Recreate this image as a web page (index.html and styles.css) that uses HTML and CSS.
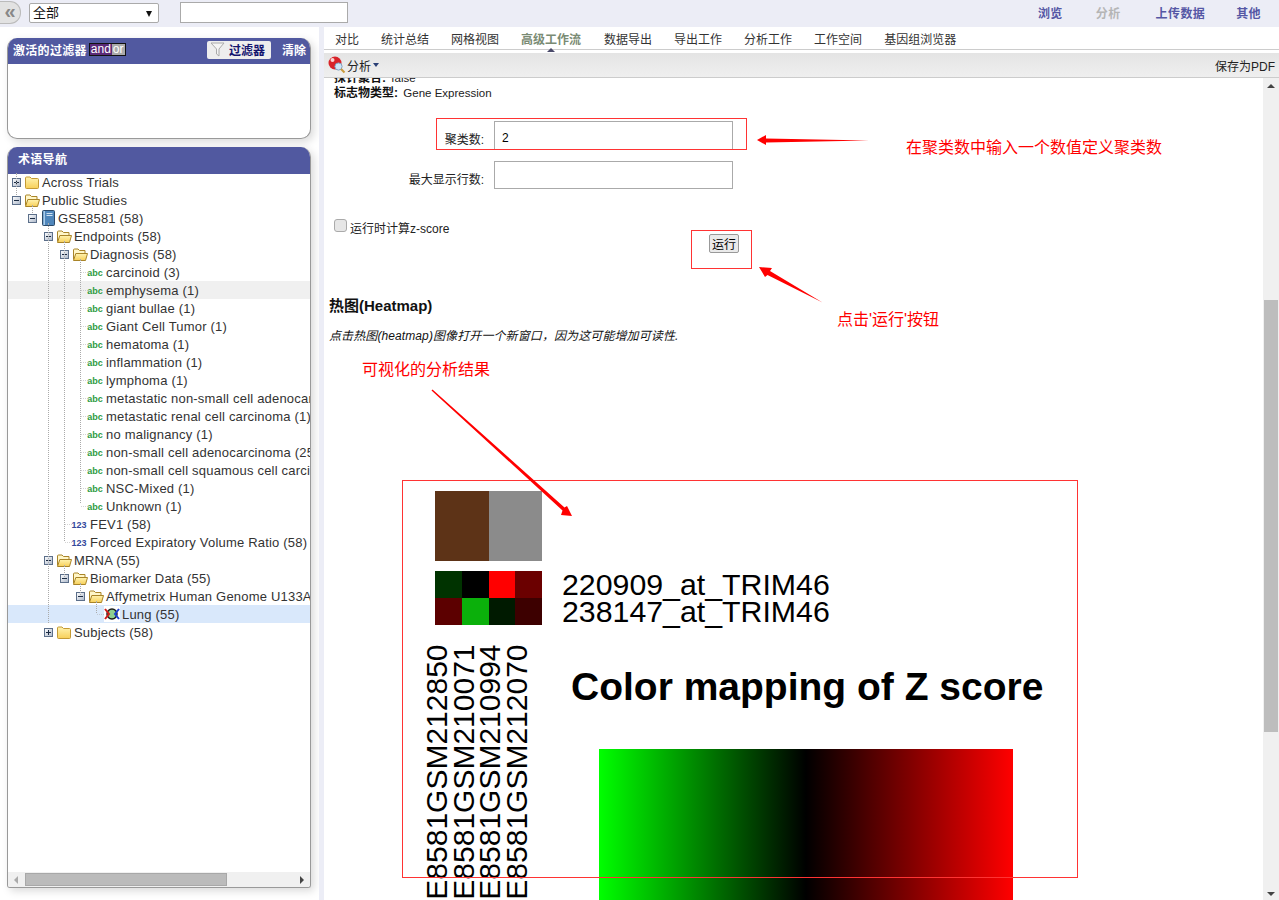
FILE: index.html
```html
<!DOCTYPE html>
<html lang="zh-CN">
<head>
  <meta charset="UTF-8">
  <title>高级工作流</title>
  <link rel="stylesheet" href="styles.css">
</head>
<body>
  <svg class="sprites" width="0" height="0">
    <defs>
      <linearGradient id="gold" x1="0" y1="0" x2="0" y2="1">
        <stop offset="0" stop-color="#fff3b0"/>
        <stop offset="1" stop-color="#f7cf58"/>
      </linearGradient>
      <linearGradient id="steel" x1="0" y1="0" x2="1" y2="1">
        <stop offset="0" stop-color="#ffffff"/>
        <stop offset="1" stop-color="#aab6c8"/>
      </linearGradient>
    </defs>
    <symbol id="folder" viewBox="0 0 16 16">
      <path d="M1.5 4 Q1.5 3 2.5 3 H6 L7.5 4.5 H13.5 Q14.5 4.5 14.5 5.5 V13.5 Q14.5 14.5 13.5 14.5 H2.5 Q1.5 14.5 1.5 13.5 Z" fill="url(#gold)" stroke="#c49a34"/>
    </symbol>
    <symbol id="folder-open" viewBox="0 0 16 16">
      <path d="M1.5 13.5 V4 Q1.5 3 2.5 3 H6 L7.5 4.5 H13 V7" fill="#fff6c8" stroke="#a98428"/>
      <path d="M1.5 14.5 L3.8 7.5 H15.5 L13.5 14.5 Z" fill="url(#gold)" stroke="#a98428" stroke-linejoin="round"/>
    </symbol>
    <symbol id="book" viewBox="0 0 16 16">
      <rect x="2.5" y="0.5" width="12" height="15" rx="1" fill="#4f86bb" stroke="#2c4a6a"/>
      <rect x="3.5" y="1" width="1.5" height="14" fill="#a9cbe8"/>
      <rect x="6.5" y="3" width="6" height="1" fill="#cfe2f2"/>
      <rect x="6.5" y="5" width="6" height="1" fill="#cfe2f2"/>
    </symbol>
    <symbol id="plus" viewBox="0 0 9 9">
      <rect x="0.5" y="0.5" width="8" height="8" fill="url(#steel)" stroke="#5c6f8a"/>
      <path d="M2 4.5 H7 M4.5 2 V7" stroke="#1c2c44"/>
    </symbol>
    <symbol id="minus" viewBox="0 0 9 9">
      <rect x="0.5" y="0.5" width="8" height="8" fill="url(#steel)" stroke="#5c6f8a"/>
      <path d="M2 4.5 H7" stroke="#1c2c44"/>
    </symbol>
  </svg>

  <div class="topbar">
    <div class="collapse-btn">«</div>
    <div class="select-wrap"><select class="scope"><option>全部</option></select></div>
    <input class="search" type="text">
    <div class="topnav">
      <a class="nav-browse">浏览</a>
      <a class="nav-analyze">分析</a>
      <a class="nav-upload">上传数据</a>
      <a class="nav-other">其他</a>
    </div>
  </div>

  <div class="page">
    <div class="sidebar">
      <div class="card filter-card">
        <div class="card-head">
          <span class="head-title">激活的过滤器</span>
          <span class="andor"><i class="and">and</i><i class="or">or</i></span>
          <span class="filter-btn">
            <svg width="15" height="15" viewBox="0 0 15 15"><path d="M1 1 H14 L9 7 V14 L6.5 12 V7 Z" fill="#f4f4f4" stroke="#aaa"/></svg>
            过滤器
          </span>
          <span class="clear">清除</span>
        </div>
      </div>

      <div class="card tree-card">
        <div class="card-head tree-head"><span class="head-title">术语导航</span></div>
        <div class="tree">
          <div class="guide g1"></div>
          <div class="guide g2"></div>
          <div class="guide g3"></div>
          <div class="guide g4"></div>
          <div class="guide g5"></div>
          <div class="guide g6"></div>
          <div class="guide g7"></div>
          <div class="guide g8"></div>

          <div class="row d0"><svg class="tog"><use href="#plus"/></svg><svg class="ico"><use href="#folder"/></svg>Across Trials</div>
          <div class="row d0"><svg class="tog"><use href="#minus"/></svg><svg class="ico"><use href="#folder-open"/></svg>Public Studies</div>
          <div class="row d1"><svg class="tog"><use href="#minus"/></svg><svg class="ico"><use href="#book"/></svg>GSE8581 (58)</div>
          <div class="row d2"><svg class="tog"><use href="#minus"/></svg><svg class="ico"><use href="#folder-open"/></svg>Endpoints (58)</div>
          <div class="row d3"><svg class="tog"><use href="#minus"/></svg><svg class="ico"><use href="#folder-open"/></svg>Diagnosis (58)</div>
          <div class="row d4"><span class="link"></span><span class="abc">abc</span>carcinoid (3)</div>
          <div class="row d4 hover"><span class="link"></span><span class="abc">abc</span>emphysema (1)</div>
          <div class="row d4"><span class="link"></span><span class="abc">abc</span>giant bullae (1)</div>
          <div class="row d4"><span class="link"></span><span class="abc">abc</span>Giant Cell Tumor (1)</div>
          <div class="row d4"><span class="link"></span><span class="abc">abc</span>hematoma (1)</div>
          <div class="row d4"><span class="link"></span><span class="abc">abc</span>inflammation (1)</div>
          <div class="row d4"><span class="link"></span><span class="abc">abc</span>lymphoma (1)</div>
          <div class="row d4"><span class="link"></span><span class="abc">abc</span>metastatic non-small cell adenocarcinoma (1)</div>
          <div class="row d4"><span class="link"></span><span class="abc">abc</span>metastatic renal cell carcinoma (1)</div>
          <div class="row d4"><span class="link"></span><span class="abc">abc</span>no malignancy (1)</div>
          <div class="row d4"><span class="link"></span><span class="abc">abc</span>non-small cell adenocarcinoma (25)</div>
          <div class="row d4"><span class="link"></span><span class="abc">abc</span>non-small cell squamous cell carcinoma (22)</div>
          <div class="row d4"><span class="link"></span><span class="abc">abc</span>NSC-Mixed (1)</div>
          <div class="row d4"><span class="link"></span><span class="abc">abc</span>Unknown (1)</div>
          <div class="row d3"><span class="link"></span><span class="num">123</span>FEV1 (58)</div>
          <div class="row d3"><span class="link"></span><span class="num">123</span>Forced Expiratory Volume Ratio (58)</div>
          <div class="row d2"><svg class="tog"><use href="#minus"/></svg><svg class="ico"><use href="#folder-open"/></svg>MRNA (55)</div>
          <div class="row d3"><svg class="tog"><use href="#minus"/></svg><svg class="ico"><use href="#folder-open"/></svg>Biomarker Data (55)</div>
          <div class="row d4"><svg class="tog"><use href="#minus"/></svg><svg class="ico"><use href="#folder-open"/></svg>Affymetrix Human Genome U133A 2.0 Array (55)</div>
          <div class="row d5 selected"><span class="link"></span>
            <svg class="ico" viewBox="0 0 16 16">
              <rect width="16" height="16" fill="#fff"/>
              <circle cx="8" cy="8" r="5" fill="#8fcf8f" stroke="#1a1a1a" stroke-width="1.5"/>
              <path d="M1 3 L5 8 L1 13" fill="none" stroke="#d01c1c" stroke-width="2"/>
              <path d="M15 3 L11 8 L15 13" fill="none" stroke="#1c3fd0" stroke-width="2"/>
            </svg>Lung (55)</div>
          <div class="row d2"><svg class="tog"><use href="#plus"/></svg><svg class="ico"><use href="#folder"/></svg>Subjects (58)</div>
        </div>
        <div class="hscroll">
          <span class="arrow-left"></span>
          <span class="hthumb"></span>
          <span class="arrow-right"></span>
        </div>
      </div>
    </div>

    <div class="gutter"></div>

    <div class="main">
      <div class="tabs">
        <a>对比</a>
        <a>统计总结</a>
        <a>网格视图</a>
        <a class="active">高级工作流</a>
        <a>数据导出</a>
        <a>导出工作</a>
        <a>分析工作</a>
        <a>工作空间</a>
        <a>基因组浏览器</a>
      </div>
      <div class="toolbar">
        <svg width="18" height="18" viewBox="0 0 18 18">
          <circle cx="7" cy="7" r="6.5" fill="#d8232a"/>
          <circle cx="4.5" cy="4" r="2" fill="#fbd5d5"/>
          <circle cx="10.5" cy="10.5" r="3.6" fill="#cfe6f7" stroke="#7f9fbf"/>
          <path d="M13 13 L16.5 16.5" stroke="#c99a3c" stroke-width="2"/>
        </svg>
        <span class="tool-label">分析</span><span class="caret"></span>
        <span class="save-pdf">保存为PDF</span>
      </div>

      <div class="content">
        <div class="scroller">
          <div class="meta">
            <div><b>探针聚合:</b> <span>false</span></div>
            <div><b>标志物类型:</b> <span>Gene Expression</span></div>
          </div>

          <div class="field field-first">
            <label>聚类数:</label>
            <input type="text" value="2">
          </div>
          <div class="field">
            <label>最大显示行数:</label>
            <input type="text">
          </div>

          <label class="zscore"><input type="checkbox"> 运行时计算z-score</label>
          <div class="run-row"><button class="run">运行</button></div>

          <h3 class="section-title">热图(Heatmap)</h3>
          <p class="hint">点击热图(heatmap)图像打开一个新窗口，因为这可能增加可读性.</p>

          <div class="figure">
            <div class="colorbar">
              <span class="brown"></span>
              <span class="gray"></span>
            </div>
            <div class="heat-row">
              <div class="heat">
                <span class="c1"></span><span class="c2"></span><span class="c3"></span><span class="c4"></span>
                <span class="c5"></span><span class="c6"></span><span class="c7"></span><span class="c8"></span>
              </div>
              <div class="probes">
                <div>220909_at_TRIM46</div>
                <div>238147_at_TRIM46</div>
              </div>
            </div>
            <div class="lower">
              <div class="samples">
                <span>GSE8581GSM212850</span>
                <span>GSE8581GSM210071</span>
                <span>GSE8581GSM210994</span>
                <span>GSE8581GSM212070</span>
              </div>
              <div class="legend">
                <div class="legend-title">Color mapping of Z score</div>
                <div class="gradient"></div>
              </div>
            </div>
          </div>
        </div>
        <div class="vscroll">
          <span class="arrow-up"></span>
          <span class="vthumb"></span>
          <span class="arrow-down"></span>
        </div>
      </div>

      <!-- 标注 -->
      <div class="note-box box-clusters"></div>
      <div class="note-box box-run"></div>
      <div class="note-box box-figure"></div>
      <div class="note note-clusters">在聚类数中输入一个数值定义聚类数</div>
      <div class="note note-run">点击'运行'按钮</div>
      <div class="note note-result">可视化的分析结果</div>
      <svg class="arrows" width="955" height="873" viewBox="324 27 955 873">
        <path d="M869 140.5 L766 138.5 V135 L757 140 L766 145 V142.5 Z" fill="#f00"/>
        <path d="M822.5 302.5 L770 271 L772 268 L759 267 L765 277 L767.5 275 Z" fill="#f00"/>
        <path d="M431.5 390.5 L432.5 389.5 L564.5 507.5 L567 506 L572 516 L561 515 L562.5 510.5 Z" fill="#f00"/>
      </svg>
    </div>
  </div>
</body>
</html>
```

FILE: styles.css
```css
html, body {
  margin: 0;
  height: 900px;
  overflow: hidden;
}
body {
  font-family: "Liberation Sans", "Noto Sans CJK SC", sans-serif;
  font-size: 12px;
  color: #222;
  background: #fff;
}
.sprites {
  position: absolute;
}

/* 顶部 */
.topbar {
  height: 27px;
  padding-bottom: 2px;
  background: #ecedf6;
  display: flex;
  align-items: center;
  box-sizing: border-box;
}
.collapse-btn {
  width: 21px;
  height: 23px;
  box-sizing: border-box;
  background: #e2e2e2;
  border: 1px solid #bbb;
  border-left: 0;
  border-radius: 0 11px 11px 0;
  color: #888;
  font-size: 20px;
  font-weight: bold;
  line-height: 18px;
  text-align: center;
}
.select-wrap {
  position: relative;
  margin-left: 8px;
}
.select-wrap::after {
  content: "";
  position: absolute;
  right: 7px;
  top: 8px;
  border-left: 3px solid transparent;
  border-right: 3px solid transparent;
  border-top: 6px solid #111;
}
.scope {
  appearance: none;
  display: block;
  width: 130px;
  height: 20px;
  padding: 0 3px;
  background: #fff;
  border: 1px solid #aaa;
  border-radius: 2px;
  font: 13px "Liberation Sans", "Noto Sans CJK SC", sans-serif;
  color: #111;
}
.search {
  width: 168px;
  height: 21px;
  box-sizing: border-box;
  margin-left: 21px;
  border: 1px solid #aaa;
  background: #fff;
}
.topnav {
  margin-left: auto;
  display: flex;
  font-weight: bold;
  letter-spacing: 0.4px;
  color: #5557a5;
  padding-right: 18px;
}
.nav-analyze { color: #b5b5b5; margin-left: 33px; }
.nav-upload { margin-left: 35px; }
.nav-other { margin-left: 31px; }

.page {
  display: flex;
  height: 873px;
}

/* 左栏 */
.sidebar {
  width: 319px;
  flex: none;
  box-sizing: border-box;
  padding: 11px 8px 0 7px;
}
.card {
  border: 1px solid #999;
  border-top: 0;
  border-radius: 10px;
  background: #fff;
  box-shadow: 3px 3px 8px rgba(0, 0, 0, 0.15);
  overflow: hidden;
}
.filter-card {
  height: 101px;
  box-sizing: border-box;
}
.card-head {
  margin: 0 -1px;
  height: 26px;
  box-sizing: border-box;
  padding: 0 5px 3px 6px;
  display: flex;
  align-items: center;
  background: #5159a0;
  color: #fff;
  font-weight: bold;
}
.head-title {
  letter-spacing: 0.3px;
}
.andor {
  display: flex;
  margin-left: 2px;
  border: 1px solid #111;
  font-weight: normal;
  line-height: 11px;
}
.andor i {
  font-style: normal;
  padding: 0 1px;
}
.and { background: #5b2a78; }
.or { background: #aaa; }
.filter-btn {
  margin-left: auto;
  width: 64px;
  height: 18px;
  box-sizing: border-box;
  padding-left: 3px;
  display: flex;
  align-items: center;
  gap: 4px;
  background: #eee;
  border-radius: 2px;
  color: #14146e;
}
.clear {
  margin-left: 11px;
}
.tree-card {
  margin-top: 8px;
  height: 741px;
  box-sizing: border-box;
  display: flex;
  flex-direction: column;
  border-radius: 10px 10px 3px 3px;
}
.tree-head {
  height: 27px;
  flex: none;
  padding-left: 11px;
  padding-bottom: 4px;
}
.tree {
  position: relative;
  flex: 1;
  overflow: hidden;
  margin-top: -1px;
}
.row {
  height: 18px;
  display: flex;
  align-items: center;
  white-space: nowrap;
  font-size: 13px;
  letter-spacing: 0.2px;
  color: #333;
}
.d0 { padding-left: 4px; }
.d1 { padding-left: 20px; }
.d2 { padding-left: 36px; }
.d3 { padding-left: 52px; }
.d4 { padding-left: 68px; }
.d5 { padding-left: 84px; }
.d5 .ico { margin-left: 1px; }
.hover { background: #f0f0f0; }
.selected { background: #d9e8fb; }
.tog {
  width: 9px;
  height: 9px;
  flex: none;
  margin: 0 3px 0 0;
}
.ico {
  width: 16px;
  height: 16px;
  flex: none;
  margin-right: 2px;
}
.link {
  width: 12px;
  height: 1px;
  flex: none;
  box-sizing: border-box;
  margin-right: -1px;
  border-bottom: 1px dotted #aaa;
  clip-path: inset(0 0 0 4px);
}
.abc, .num {
  width: 16px;
  flex: none;
  margin-right: 3px;
  padding-top: 2px;
  font-size: 9px;
  font-weight: bold;
  letter-spacing: 0;
  text-align: center;
}
.abc { color: #2e9c3f; }
.num { color: #33489c; }
.guide {
  position: absolute;
  border-left: 1px dotted #aaa;
}
.g1 { left: 8px; top: 0; height: 22px; }
.g2 { left: 24px; top: 32px; height: 8px; }
.g3 { left: 40px; top: 50px; height: 400px; }
.g4 { left: 56px; top: 68px; height: 300px; }
.g5 { left: 72px; top: 86px; height: 244px; }
.g6 { left: 56px; top: 392px; height: 12px; }
.g7 { left: 72px; top: 410px; height: 12px; }
.g8 { left: 88px; top: 428px; height: 12px; }
.hscroll {
  height: 15px;
  flex: none;
  display: flex;
  align-items: center;
  background: #f0f0f0;
}
.hthumb {
  width: 202px;
  height: 13px;
  box-sizing: border-box;
  margin-left: 7px;
  background: #bbb;
  border: 1px solid #a8a8a8;
}
.arrow-left, .arrow-right {
  width: 0;
  height: 0;
  border-top: 4px solid transparent;
  border-bottom: 4px solid transparent;
}
.arrow-left {
  margin-left: 6px;
  border-right: 4px solid #aaa;
}
.arrow-right {
  margin-left: auto;
  margin-right: 6px;
  border-left: 4px solid #444;
}

.gutter {
  width: 5px;
  flex: none;
  background: #ecedf6;
}

/* 主区 */
.main {
  position: relative;
  flex: 1;
  min-width: 0;
  display: flex;
  flex-direction: column;
}
.tabs {
  height: 22px;
  flex: none;
  display: flex;
  align-items: center;
  gap: 22px;
  padding-left: 11px;
  border-bottom: 1px solid #ccc;
  color: #333;
}
.tabs a {
  position: relative;
}
.tabs .active {
  color: #7a8b74;
  font-weight: bold;
  margin-right: 1px;
}
.tabs .active::after {
  content: "";
  position: absolute;
  left: 26px;
  bottom: -5px;
  border-left: 4px solid transparent;
  border-right: 4px solid transparent;
  border-bottom: 4px solid #4a4a6a;
}
.toolbar {
  height: 24px;
  flex: none;
  margin-top: 3px;
  padding: 0 4px;
  display: flex;
  align-items: center;
  background: linear-gradient(#e4e4e4, #efefef);
  border-bottom: 1px solid #ccc;
}
.tool-label {
  margin-left: 1px;
}
.caret {
  margin-left: 2px;
  border-left: 3px solid transparent;
  border-right: 3px solid transparent;
  border-top: 4px solid #2a3f75;
}
.save-pdf {
  margin-left: auto;
}
.content {
  flex: 1;
  min-height: 0;
  display: flex;
}
.scroller {
  flex: 1;
  min-width: 0;
  overflow: hidden;
}
.meta {
  margin: -7px 0 0 10px;
  line-height: 15px;
}
.meta b {
  color: #111;
  margin-right: 2px;
}
.meta span {
  font-size: 11.5px;
}
.field {
  display: flex;
  align-items: center;
  height: 28px;
  margin-top: 11px;
}
.field-first {
  margin-top: 20px;
  height: 29px;
}
.field label {
  width: 160px;
  text-align: right;
  padding-top: 6px;
}
.field input {
  width: 239px;
  height: 100%;
  box-sizing: border-box;
  margin-left: 10px;
  padding: 4px 7px 0;
  border: 1px solid #aaa;
  font: 12px "Liberation Sans", sans-serif;
}
.zscore {
  display: flex;
  align-items: center;
  margin: 30px 0 0 10px;
}
.zscore input {
  appearance: none;
  width: 13px;
  height: 13px;
  box-sizing: border-box;
  margin: 0 3px 4px 0;
  background: #e6e6e6;
  border: 1px solid #aaa;
  border-radius: 3px;
}
.run-row {
  margin: -2px 0 0 385px;
}
.run {
  display: block;
  width: 30px;
  height: 19px;
  padding: 0;
  background: #eaeaea;
  border: 1px solid #999;
  border-radius: 2px;
  font: 12px "Liberation Sans", "Noto Sans CJK SC", sans-serif;
}
.section-title {
  margin: 44px 0 0 5px;
  font-size: 15px;
  line-height: 18px;
  color: #111;
}
.hint {
  margin: 14px 0 0 5px;
  font-size: 12px;
  line-height: 15px;
  font-style: italic;
  letter-spacing: 0.1px;
  color: #111;
}
.figure {
  margin: 147px 0 0 111px;
}
.colorbar {
  display: flex;
  width: 107px;
  height: 70px;
}
.brown { flex: 1; background: #5d3317; }
.gray { flex: 1; background: #8b8b8b; }
.heat-row {
  display: flex;
  align-items: center;
  margin-top: 10px;
}
.heat {
  display: grid;
  grid-template-columns: repeat(4, 1fr);
  grid-template-rows: 1fr 1fr;
  width: 107px;
  height: 54px;
}
.c1 { background: #003300; }
.c2 { background: #000; }
.c3 { background: #f00; }
.c4 { background: #6b0000; }
.c5 { background: #5c0000; }
.c6 { background: #0bb00b; }
.c7 { background: #001a00; }
.c8 { background: #3d0000; }
.probes {
  margin-left: 20px;
  font-family: "Liberation Sans", sans-serif;
  font-size: 30.3px;
  line-height: 27px;
  color: #000;
}
.lower {
  display: flex;
  margin-top: 20px;
}
.samples {
  display: flex;
  flex: none;
  width: 148px;
  margin-left: -12px;
}
.samples span {
  width: 26.7px;
  height: 298px;
  writing-mode: vertical-rl;
  transform: rotate(180deg);
  font-family: "Liberation Sans", sans-serif;
  font-size: 30px;
  line-height: 27px;
  color: #000;
  white-space: nowrap;
  text-align: left;
}
.legend-title {
  margin-top: 20px;
  font-family: "Liberation Sans", sans-serif;
  font-size: 39px;
  font-weight: bold;
  line-height: 44px;
  color: #000;
  white-space: nowrap;
}
.gradient {
  width: 414px;
  height: 160px;
  margin: 40px 0 0 28px;
  background: linear-gradient(90deg, #0f0, #000 50%, #f00);
}
.vscroll {
  width: 16px;
  flex: none;
  position: relative;
  background: #f0f0f0;
}
.vthumb {
  position: absolute;
  left: 1px;
  top: 222px;
  width: 14px;
  height: 432px;
  background: #bdbdbd;
}
.arrow-up, .arrow-down {
  position: absolute;
  left: 4px;
  width: 0;
  height: 0;
  border-left: 4px solid transparent;
  border-right: 4px solid transparent;
}
.arrow-up { top: 6px; border-bottom: 4px solid #444; }
.arrow-down { bottom: 4px; border-top: 4px solid #444; }

/* 标注 */
.note-box {
  position: absolute;
  box-sizing: border-box;
  border: 1px solid #f33;
}
.box-clusters { left: 112px; top: 91px; width: 311px; height: 32px; }
.box-run { left: 367px; top: 203px; width: 61px; height: 39px; }
.box-figure { left: 78px; top: 453px; width: 676px; height: 398px; }
.note {
  position: absolute;
  color: #f00;
  font-size: 16px;
  line-height: 20px;
  white-space: nowrap;
}
.note-clusters { left: 582px; top: 111px; }
.note-run { left: 513px; top: 283px; }
.note-result { left: 38px; top: 333px; }
.arrows {
  position: absolute;
  left: 0;
  top: 0;
  pointer-events: none;
}
```
